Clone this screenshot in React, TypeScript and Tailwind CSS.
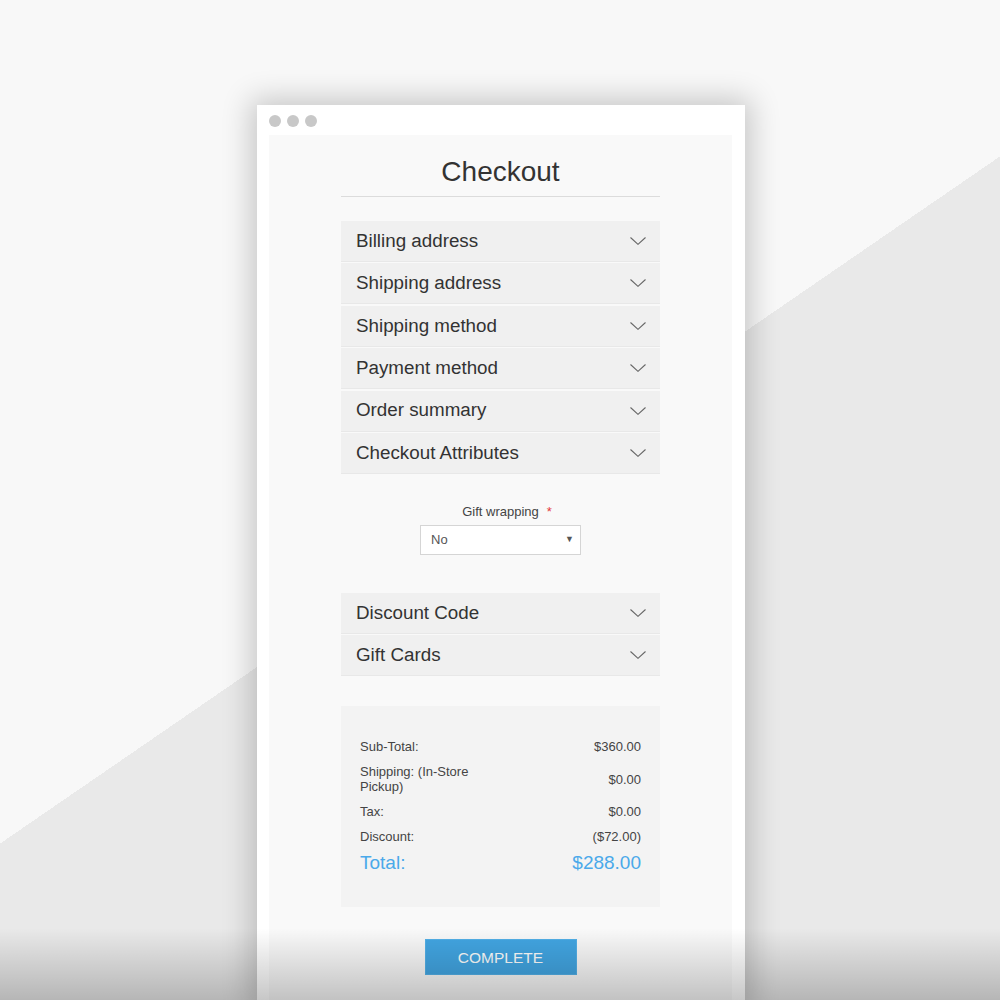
import React from 'react';

const sections = ['Billing address', 'Shipping address', 'Shipping method', 'Payment method', 'Order summary', 'Checkout Attributes'];
const extraSections = ['Discount Code', 'Gift Cards'];

const totals = [
  { label: 'Sub-Total:', value: '$360.00' },
  { label: 'Shipping: (In-Store Pickup)', value: '$0.00' },
  { label: 'Tax:', value: '$0.00' },
  { label: 'Discount:', value: '($72.00)' },
];

const Chevron = () => (
  <svg width="16" height="8" viewBox="0 0 16 8" fill="none" className="shrink-0">
    <polyline points="0.5,0.5 8,7.3 15.5,0.5" stroke="#666" strokeWidth="1.1" />
  </svg>
);

const AccordionRow: React.FC<{ title: string }> = ({ title }) => (
  <div className="flex h-[41px] items-center justify-between border-b border-[#e8e8e8] bg-[#f0f0f0] pl-[15px] pr-[14px]">
    <span className="text-[18.8px] text-[#333]">{title}</span>
    <Chevron />
  </div>
);

export default function App() {
  return (
    <div className="relative h-[1000px] w-[1000px] overflow-hidden bg-[linear-gradient(145.5deg,#f8f8f8_50%,#e9e9e9_50%)] pt-[105px] font-['Liberation_Sans',Arial,sans-serif]">
      <div className="ml-[257px] min-h-[900px] w-[488px] bg-white pl-[12px] pt-[10px] shadow-[0_0_28px_6px_rgba(0,0,0,0.2)]">
        <div className="flex gap-[6px]">
          <span className="h-[12px] w-[12px] rounded-full bg-[#c8c8c8]" />
          <span className="h-[12px] w-[12px] rounded-full bg-[#c8c8c8]" />
          <span className="h-[12px] w-[12px] rounded-full bg-[#c8c8c8]" />
        </div>

        <div className="mt-[8px] min-h-[870px] w-[463px] bg-[#f9f9f9] pt-[20px]">
          <div className="ml-[72px] w-[319px]">
            <h1 className="border-b border-[#dcdcdc] pb-[8px] text-center text-[28px] leading-[33px] text-[#333]">Checkout</h1>

            <div className="mt-[24px] flex flex-col gap-[1.4px]">
              {sections.map((s) => (
                <AccordionRow key={s} title={s} />
              ))}
            </div>

            <div className="mt-[30px] flex flex-col items-center">
              <label className="relative text-[13px] leading-[15px] text-[#444]">
                Gift wrapping
                <span className="absolute left-full top-0 ml-[8px] text-[#e4393c]">*</span>
              </label>
              <div className="mt-[6px] flex h-[30px] w-[161px] items-center justify-between border border-[#d5d5d5] bg-white pl-[10px] pr-[6px]">
                <span className="text-[13px] text-[#555]">No</span>
                <span className="text-[9px] text-[#555]">▼</span>
              </div>
            </div>

            <div className="mt-[38px] flex flex-col gap-[1.4px]">
              {extraSections.map((s) => (
                <AccordionRow key={s} title={s} />
              ))}
            </div>

            <div className="mt-[30px] h-[201px] bg-[#f3f3f3] px-[19px] pt-[28px]">
              <table className="w-full border-collapse">
                <tbody>
                  {totals.map((t) => (
                    <tr key={t.label}>
                      <td className="w-[50%] py-[5px] text-[13px] leading-[15px] text-[#444]">{t.label}</td>
                      <td className="py-[5px] text-right text-[13px] leading-[15px] text-[#444]">{t.value}</td>
                    </tr>
                  ))}
                  <tr>
                    <td className="pt-[3px] text-[19px] leading-[22px] text-[#4aa9ea]">Total:</td>
                    <td className="pt-[3px] text-right text-[19px] leading-[22px] text-[#4aa9ea]">$288.00</td>
                  </tr>
                </tbody>
              </table>
            </div>

            <div className="mt-[32px] flex justify-center">
              <button className="h-[36px] w-[152px] border border-[#52b0e8] bg-[#42a6e3] text-[15.5px] uppercase text-white">
                Complete
              </button>
            </div>
          </div>
        </div>
      </div>

      <div className="pointer-events-none absolute inset-x-0 bottom-0 h-[72px] bg-[linear-gradient(to_bottom,rgba(0,0,0,0),rgba(0,0,0,0.22))]" />
    </div>
  );
}
